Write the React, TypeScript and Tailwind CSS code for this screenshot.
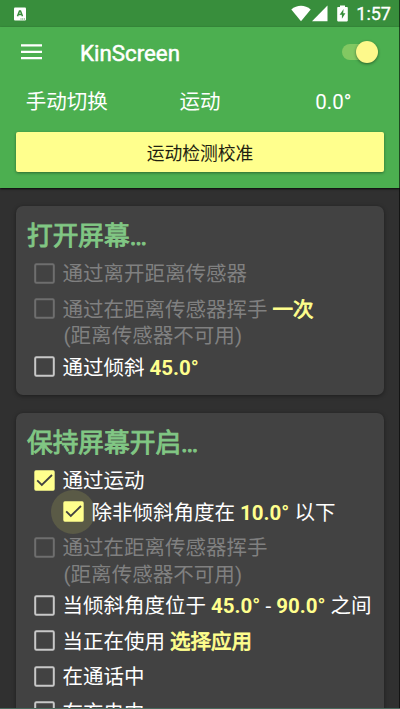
import React from 'react';
import clsx from 'clsx';

interface OptionProps {
  children: React.ReactNode;
  checked?: boolean;
  disabled?: boolean;
  focused?: boolean;
  nested?: boolean;
  compact?: boolean;
  note?: string;
}

const Checkbox: React.FC<{ checked?: boolean; disabled?: boolean; focused?: boolean }> = ({ checked, disabled, focused }) => (
  <div className="relative h-[21px] w-[21px] shrink-0">
    {focused && <div className="absolute -bottom-[11.5px] -left-[12px] -right-[11px] -top-[11.5px] rounded-full bg-[#5a5a46]" />}
    <svg viewBox="0 0 21 21" className="relative block h-[21px] w-[21px]" fill="none">
      {checked ? (
        <>
          <rect x="0.3" y="0.3" width="20.4" height="20.4" rx="1.6" fill="#ffff8d" />
          <path d="M3.2 10.4L7.8 15L18 5" stroke="#424242" strokeWidth="1.8" />
        </>
      ) : (
        <rect x="1.2" y="1.2" width="18.6" height="18.6" rx="1.2" stroke={disabled ? '#6e6e6e' : '#c8c8c8'} strokeWidth="2" />
      )}
    </svg>
  </div>
);

const Option: React.FC<OptionProps> = ({ children, checked, disabled, focused, nested, compact, note }) => (
  <div className={clsx(nested ? 'pl-[47px]' : 'pl-[18px]', disabled ? 'text-[#808080]' : 'text-white')}>
    <div className={clsx('flex items-center gap-[7.5px]', compact ? 'h-[28px]' : 'h-[35.5px]')}>
      <Checkbox checked={checked} disabled={disabled} focused={focused} />
      <div className="relative whitespace-pre pt-[2px] leading-[24px]">{children}</div>
    </div>
    {note && <div className="h-[22.5px] pl-[29.5px] pt-[1.5px] text-[20.55px] leading-[17.5px] whitespace-nowrap">{note}</div>}
  </div>
);

const Value: React.FC<{ children: React.ReactNode }> = ({ children }) => (
  <span className="font-bold text-[#ffff8d]">{children}</span>
);

// Hanzi values are emboldened from the regular weight
const Link: React.FC<{ children: React.ReactNode }> = ({ children }) => (
  <span className="text-[#ffff8d] [-webkit-text-stroke:0.8px_#ffff8d]">{children}</span>
);

const Card: React.FC<{ title: string; className?: string; children: React.ReactNode }> = ({ title, className, children }) => (
  <section className={clsx('mx-4 shrink-0 rounded-[7px] bg-[#424242] shadow-[0_1px_4px_rgba(0,0,0,0.4)]', className)}>
    <h2 className="pl-[11px] pt-[13px] text-[25.7px] leading-[34px] text-[#81c784] [-webkit-text-stroke:0.9px_#81c784]">{title}</h2>
    {children}
  </section>
);

const StatusBar = () => (
  <div className="flex h-[27px] shrink-0 items-center bg-[#388e3c] pl-[14px] pr-[9px]">
    <svg width="12" height="14" viewBox="0 0 12 14">
      <rect y="0.5" width="12" height="13" rx="1" fill="white" />
      <path d="M3.5 9.3L5.5 4H6.5L8.5 9.3M4.3 7.6H7.7" stroke="#388e3c" strokeWidth="1.5" fill="none" />
      <path d="M6.5 12H11" stroke="#388e3c" strokeWidth="1" strokeDasharray="1 0.7" />
    </svg>
    <div className="ml-auto flex items-center">
      <svg width="20" height="17" viewBox="0 0 20 17" fill="white">
        <path d="M0.3 4.4C6 -0.5 14 -0.5 19.7 4.4L10 16.2Z" />
      </svg>
      <svg width="16" height="17" viewBox="0 0 16 17" fill="white" className="ml-[1.5px]">
        <path d="M15.5 0.5V16.2H0Z" />
      </svg>
      <svg width="11" height="17" viewBox="0 0 11 17" className="ml-[9px]">
        <path d="M3 0.4H8V2H10A0.8 0.8 0 0 1 10.8 2.8V15.6A0.8 0.8 0 0 1 10 16.4H1A0.8 0.8 0 0 1 0.2 15.6V2.8A0.8 0.8 0 0 1 1 2H3Z" fill="white" />
        <path d="M6.6 4L2.6 9.7H4.9V13.8L8.4 8.2H6.2Z" fill="#388e3c" />
      </svg>
      <span className="ml-[8px] text-[18px] leading-[27px] [-webkit-text-stroke:0.3px_white]">1:57</span>
    </div>
  </div>
);

export default function App() {
  return (
    <div className="relative flex h-[709px] w-[400px] flex-col overflow-hidden bg-[#303030] font-['Roboto','Noto_Sans_CJK_SC',sans-serif] text-[20.5px] text-white">
      <StatusBar />

      {/* App bar */}
      <header className="flex h-[161px] shrink-0 flex-col bg-[#4caf50] shadow-[0_1px_2px_rgba(0,0,0,0.8)]">
        <div className="flex h-[50px] items-center pl-[21px] pr-[22px]">
          <svg width="21" height="16" viewBox="0 0 21 16" fill="white">
            <path d="M0 0.2H21V2.5H0ZM0 6.7H21V9H0ZM0 12.9H21V15.2H0Z" />
          </svg>
          <h1 className="ml-[38px] pt-px text-[22.3px] leading-[30px] [-webkit-text-stroke:0.5px_white]">KinScreen</h1>
          <div className="relative ml-auto h-[22px] w-[36px]">
            <div className="absolute left-0 top-[3px] h-[16px] w-[34px] rounded-full bg-[#82c862]" />
            <div className="absolute right-0 top-0 h-[22px] w-[22px] rounded-full bg-[#fdf98b] shadow-[0_1px_3px_rgba(0,0,0,0.45)]" />
          </div>
        </div>

        <div className="grid h-[55px] grid-cols-3 items-center text-center leading-[30px]">
          <span className="-mt-[6px]">手动切换</span>
          <span className="-mt-[6px]">运动</span>
          <span className="-mt-[6px]">0.0°</span>
        </div>

        <button className="mx-4 h-[40px] rounded-[2px] bg-[#ffff8d] pt-[3px] text-[17.8px] leading-[37px] text-[#1f1f11] shadow-[0_1px_3px_rgba(0,0,0,0.4)]">
          运动检测校准
        </button>
      </header>

      <Card title="打开屏幕…" className="mt-[17.5px] h-[189.5px]">
        <div className="pt-[3px]">
          <Option disabled>通过离开距离传感器</Option>
          <Option disabled note="(距离传感器不可用)">
            通过在距离传感器挥手 <Link>一次</Link>
          </Option>
          <Option>通过倾斜 <Value>45.0°</Value></Option>
        </div>
      </Card>

      <Card title="保持屏幕开启…" className="mt-[18px] h-[330px]">
        <div className="pt-[6px]">
          <Option checked compact>通过运动</Option>
          <Option checked focused nested>
            除非倾斜角度在 <Value>10.0°</Value> 以下
          </Option>
          <Option disabled note="(距离传感器不可用)">通过在距离传感器挥手</Option>
          <Option>
            当倾斜角度位于 <Value>45.0°</Value> - <Value>90.0°</Value> 之间
          </Option>
          <Option>当正在使用 <Link>选择应用</Link></Option>
          <Option>在通话中</Option>
          <Option>在充电中</Option>
        </div>
      </Card>

      {/* Screen edges */}
      <div className="absolute inset-y-0 right-0 w-px bg-black/60" />
      <div className="absolute inset-x-0 bottom-0 h-px bg-[#4a6a5e]" />
    </div>
  );
}
